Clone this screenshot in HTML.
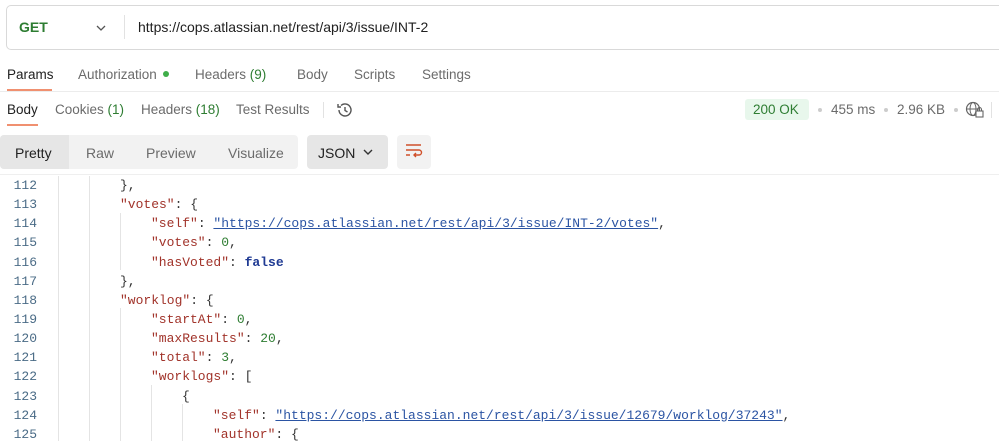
<!DOCTYPE html>
<html><head><meta charset="utf-8"><style>
*{box-sizing:border-box;margin:0;padding:0}
body{width:999px;height:441px;overflow:hidden;background:#fff;font-family:"Liberation Sans",sans-serif;color:#212121;position:relative}
.abs{position:absolute;white-space:nowrap}
.urlbox{left:6px;top:5px;width:1000px;height:45px;border:1px solid #d9d9d9;border-radius:5px}
.t{font-size:13.5px;color:#6b6b6b}
.code{font-family:"Liberation Mono",monospace;font-size:13px;}
.ln{position:absolute;left:0;width:37px;text-align:right;color:#4a6b86;font-family:"Liberation Mono",monospace;font-size:13px}
.k{color:#a1332a}.s{color:#2b54a3;text-decoration:underline}.n{color:#2e7d32}.b{color:#1f3a93;font-weight:bold}
</style></head><body>
<div class="abs urlbox"></div>
<div class="abs" style="left:19px;top:19px;font-size:14px;font-weight:bold;color:#2e7d32">GET</div>
<svg class="abs" style="left:95px;top:24px" width="12" height="8"><path d="M2 2l4 4 4-4" stroke="#555" stroke-width="1.3" fill="none"/></svg>
<div class="abs" style="left:124px;top:15px;width:1px;height:24px;background:#e2e2e2"></div>
<div class="abs" style="left:138px;top:19px;font-size:14px;color:#212121">https://cops.atlassian.net/rest/api/3/issue/INT-2</div>

<div class="abs t" style="left:7px;top:67px;color:#212121">Params</div>
<div class="abs" style="left:7px;top:89px;width:45px;height:2px;background:#f09070"></div>
<div class="abs t" style="left:78px;top:67px">Authorization</div>
<div class="abs" style="left:163px;top:71px;width:6px;height:6px;border-radius:3px;background:#3fae49"></div>
<div class="abs t" style="left:195px;top:67px">Headers <span style="color:#2e7d32">(9)</span></div>
<div class="abs t" style="left:297px;top:67px">Body</div>
<div class="abs t" style="left:354px;top:67px">Scripts</div>
<div class="abs t" style="left:422px;top:67px">Settings</div>
<div class="abs" style="left:0;top:91px;width:999px;height:1px;background:#ececec"></div>

<div class="abs t" style="left:7px;top:102px;color:#212121">Body</div>
<div class="abs" style="left:7px;top:124px;width:31px;height:2px;background:#f09070"></div>
<div class="abs t" style="left:55px;top:102px">Cookies <span style="color:#2e7d32">(1)</span></div>
<div class="abs t" style="left:141px;top:102px">Headers <span style="color:#2e7d32">(18)</span></div>
<div class="abs t" style="left:236px;top:102px">Test Results</div>
<div class="abs" style="left:323px;top:102px;width:1px;height:16px;background:#e2e2e2"></div>
<svg class="abs" style="left:335px;top:100px" width="20" height="20" viewBox="0 0 20 20"><path d="M4 10a6 6 0 1 0 2-4.5" stroke="#555" stroke-width="1.4" fill="none"/><path d="M3 4v3h3" stroke="#555" stroke-width="1.4" fill="none"/><path d="M10 7v3.5l2.5 1.5" stroke="#555" stroke-width="1.4" fill="none"/></svg>

<div class="abs" style="left:745px;top:99px;width:64px;height:21px;background:#e8f7ec;border-radius:3px"></div>
<div class="abs" style="left:753px;top:102px;font-size:13.5px;color:#2e7d32">200 OK</div>
<div class="abs" style="left:818px;top:108px;width:4px;height:4px;border-radius:2px;background:#ccc"></div>
<div class="abs t" style="left:831px;top:102px">455 ms</div>
<div class="abs" style="left:884px;top:108px;width:4px;height:4px;border-radius:2px;background:#ccc"></div>
<div class="abs t" style="left:897px;top:102px">2.96 KB</div>
<div class="abs" style="left:954px;top:108px;width:4px;height:4px;border-radius:2px;background:#ccc"></div>
<svg class="abs" style="left:965px;top:101px" width="20" height="18" viewBox="0 0 20 18"><circle cx="8" cy="8" r="6.5" stroke="#666" stroke-width="1.2" fill="none"/><ellipse cx="8" cy="8" rx="3" ry="6.5" stroke="#666" stroke-width="1" fill="none"/><path d="M1.5 8h13" stroke="#666" stroke-width="1"/><rect x="11" y="10" width="7" height="6" fill="#fff" stroke="#666" stroke-width="1.1"/><path d="M12.5 10V8.5a2 2 0 0 1 4 0V10" stroke="#666" stroke-width="1.1" fill="none"/></svg>
<div class="abs" style="left:991px;top:102px;width:1px;height:16px;background:#e2e2e2"></div>

<div class="abs" style="left:0;top:135px;width:298px;height:34px;background:#f2f2f2;border-radius:4px"></div>
<div class="abs" style="left:0;top:135px;width:69px;height:34px;background:#e6e6e6;border-radius:4px 0 0 4px"></div>
<div class="abs" style="left:15px;top:145px;font-size:14px;color:#212121">Pretty</div>
<div class="abs t" style="left:86px;top:145px;font-size:14px">Raw</div>
<div class="abs t" style="left:146px;top:145px;font-size:14px">Preview</div>
<div class="abs t" style="left:228px;top:145px;font-size:14px">Visualize</div>
<div class="abs" style="left:307px;top:135px;width:81px;height:34px;background:#e6e6e6;border-radius:4px"></div>
<div class="abs" style="left:318px;top:145px;font-size:14px;color:#212121">JSON</div>
<svg class="abs" style="left:362px;top:148px" width="12" height="8"><path d="M2 2l4 4 4-4" stroke="#333" stroke-width="1.4" fill="none"/></svg>
<div class="abs" style="left:397px;top:135px;width:34px;height:34px;background:#f2f2f2;border-radius:4px"></div>
<svg class="abs" style="left:404px;top:143px" width="20" height="18" viewBox="0 0 20 18"><path d="M2 2h15M2 7h13a2.5 2.5 0 0 1 0 5H10M12 10l-2 2 2 2M2 12h4" stroke="#d0502a" stroke-width="1.4" fill="none"/></svg>
<div class="abs" style="left:0;top:174px;width:999px;height:1px;background:#efefef"></div>

<div class="abs" style="left:58px;top:176px;width:1px;height:265px;background:#e4e4e4"></div>
<div class="abs" style="left:89px;top:176px;width:1px;height:265px;background:#e4e4e4"></div>
<div class="abs" style="left:120px;top:213px;width:1px;height:57px;background:#e4e4e4"></div>
<div class="abs" style="left:120px;top:308px;width:1px;height:133px;background:#e4e4e4"></div>
<div class="abs" style="left:151px;top:385px;width:1px;height:56px;background:#e4e4e4"></div>
<div class="abs" style="left:182px;top:404px;width:1px;height:37px;background:#e4e4e4"></div>

<div class="abs code" style="left:0;top:176px;width:999px;line-height:19.15px;color:#333">
<div style="position:relative;height:19.15px"><span class="ln">112</span><span style="position:absolute;left:120px">},</span></div>
<div style="position:relative;height:19.15px"><span class="ln">113</span><span style="position:absolute;left:120px"><span class="k">"votes"</span>: {</span></div>
<div style="position:relative;height:19.15px"><span class="ln">114</span><span style="position:absolute;left:151px"><span class="k">"self"</span>: <span class="s">"https://cops.atlassian.net/rest/api/3/issue/INT-2/votes"</span>,</span></div>
<div style="position:relative;height:19.15px"><span class="ln">115</span><span style="position:absolute;left:151px"><span class="k">"votes"</span>: <span class="n">0</span>,</span></div>
<div style="position:relative;height:19.15px"><span class="ln">116</span><span style="position:absolute;left:151px"><span class="k">"hasVoted"</span>: <span class="b">false</span></span></div>
<div style="position:relative;height:19.15px"><span class="ln">117</span><span style="position:absolute;left:120px">},</span></div>
<div style="position:relative;height:19.15px"><span class="ln">118</span><span style="position:absolute;left:120px"><span class="k">"worklog"</span>: {</span></div>
<div style="position:relative;height:19.15px"><span class="ln">119</span><span style="position:absolute;left:151px"><span class="k">"startAt"</span>: <span class="n">0</span>,</span></div>
<div style="position:relative;height:19.15px"><span class="ln">120</span><span style="position:absolute;left:151px"><span class="k">"maxResults"</span>: <span class="n">20</span>,</span></div>
<div style="position:relative;height:19.15px"><span class="ln">121</span><span style="position:absolute;left:151px"><span class="k">"total"</span>: <span class="n">3</span>,</span></div>
<div style="position:relative;height:19.15px"><span class="ln">122</span><span style="position:absolute;left:151px"><span class="k">"worklogs"</span>: [</span></div>
<div style="position:relative;height:19.15px"><span class="ln">123</span><span style="position:absolute;left:182px">{</span></div>
<div style="position:relative;height:19.15px"><span class="ln">124</span><span style="position:absolute;left:213px"><span class="k">"self"</span>: <span class="s">"https://cops.atlassian.net/rest/api/3/issue/12679/worklog/37243"</span>,</span></div>
<div style="position:relative;height:19.15px"><span class="ln">125</span><span style="position:absolute;left:213px"><span class="k">"author"</span>: {</span></div>
</div>
</body></html>
